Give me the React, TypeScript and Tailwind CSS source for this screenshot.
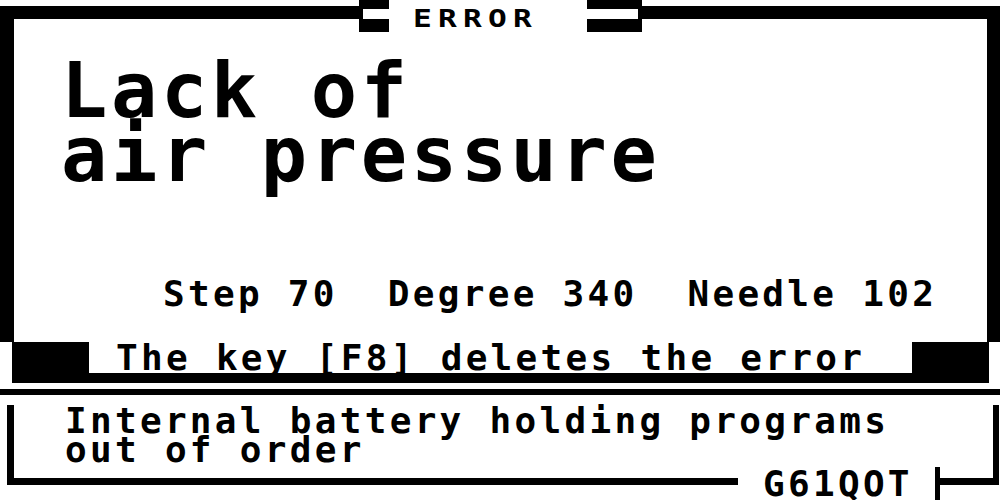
import React from "react";

const mono = { fontFamily: '"DejaVu Sans Mono", "Liberation Mono", monospace' };

export default function App() {
  return (
    <div
      className="relative w-[1000px] h-[500px] bg-white text-black overflow-hidden font-bold font-['DejaVu_Sans_Mono',monospace]"
    >
      {/* main error box */}
      <div className="pt-[6px]">
        <div className="border-t-[13px] border-l-[14px] border-r-[13px] border-black h-[336px] flex flex-col">
          <div className="mt-[40px] pl-[47px] text-[77px] leading-[64px] tracking-[3.6px] whitespace-pre">
            <div>Lack of</div>
            <div>air pressure</div>
          </div>
          <div className="mt-[89px] pl-[149px] text-[36px] leading-[36px] tracking-[3.3px] whitespace-pre">
            Step 70  Degree 340  Needle 102
          </div>
        </div>
      </div>

      {/* error message bar */}
      <div className="ml-[12px] w-[977px] bg-black px-[77px] pb-[10px]">
        <div className="bg-white h-[31px] pl-[27px] text-[36px] leading-[31px] tracking-[3.3px] whitespace-pre">
          The key [F8] deletes the error
        </div>
      </div>

      {/* separator */}
      <div className="mt-[6px] h-[6px] bg-black" />

      {/* bottom info box */}
      <div className="relative mt-[10px] ml-[7px] w-[992px] h-[80px] border-l-[7px] border-r-[6px] border-b-[7px] border-black">
        <div className="pt-[1px] pl-[51px] text-[36px] leading-[29px] tracking-[3.3px] whitespace-pre">
          <div>Internal battery holding programs</div>
          <div>out of order</div>
        </div>
        <div className="absolute left-[724px] top-[62px] flex">
          <div className="w-[197px] h-[33px] bg-white pl-[25px] text-[36px] leading-[33px] tracking-[3.3px]">
            G61QOT
          </div>
          <div className="w-[5px] h-[33px] bg-black" />
        </div>
      </div>

      {/* title legend over the top border */}
      <div className="absolute left-[359px] top-0 flex h-[32px]">
        <div className="w-[30px] h-[32px] bg-black flex flex-col">
          <div className="h-[9px]" />
          <div className="h-[10px] ml-[4px] bg-white" />
        </div>
        <div className="w-[198px] h-[32px] bg-white pl-[24px] overflow-visible">
          <span className="inline-block origin-left scale-x-[1.3] text-[24px] leading-[38px] tracking-[4.8px]" style={mono}>
            ERROR
          </span>
        </div>
        <div className="w-[55px] h-[32px] bg-black flex flex-col">
          <div className="h-[9px]" />
          <div className="h-[10px] mr-[4px] bg-white" />
        </div>
      </div>
    </div>
  );
}
